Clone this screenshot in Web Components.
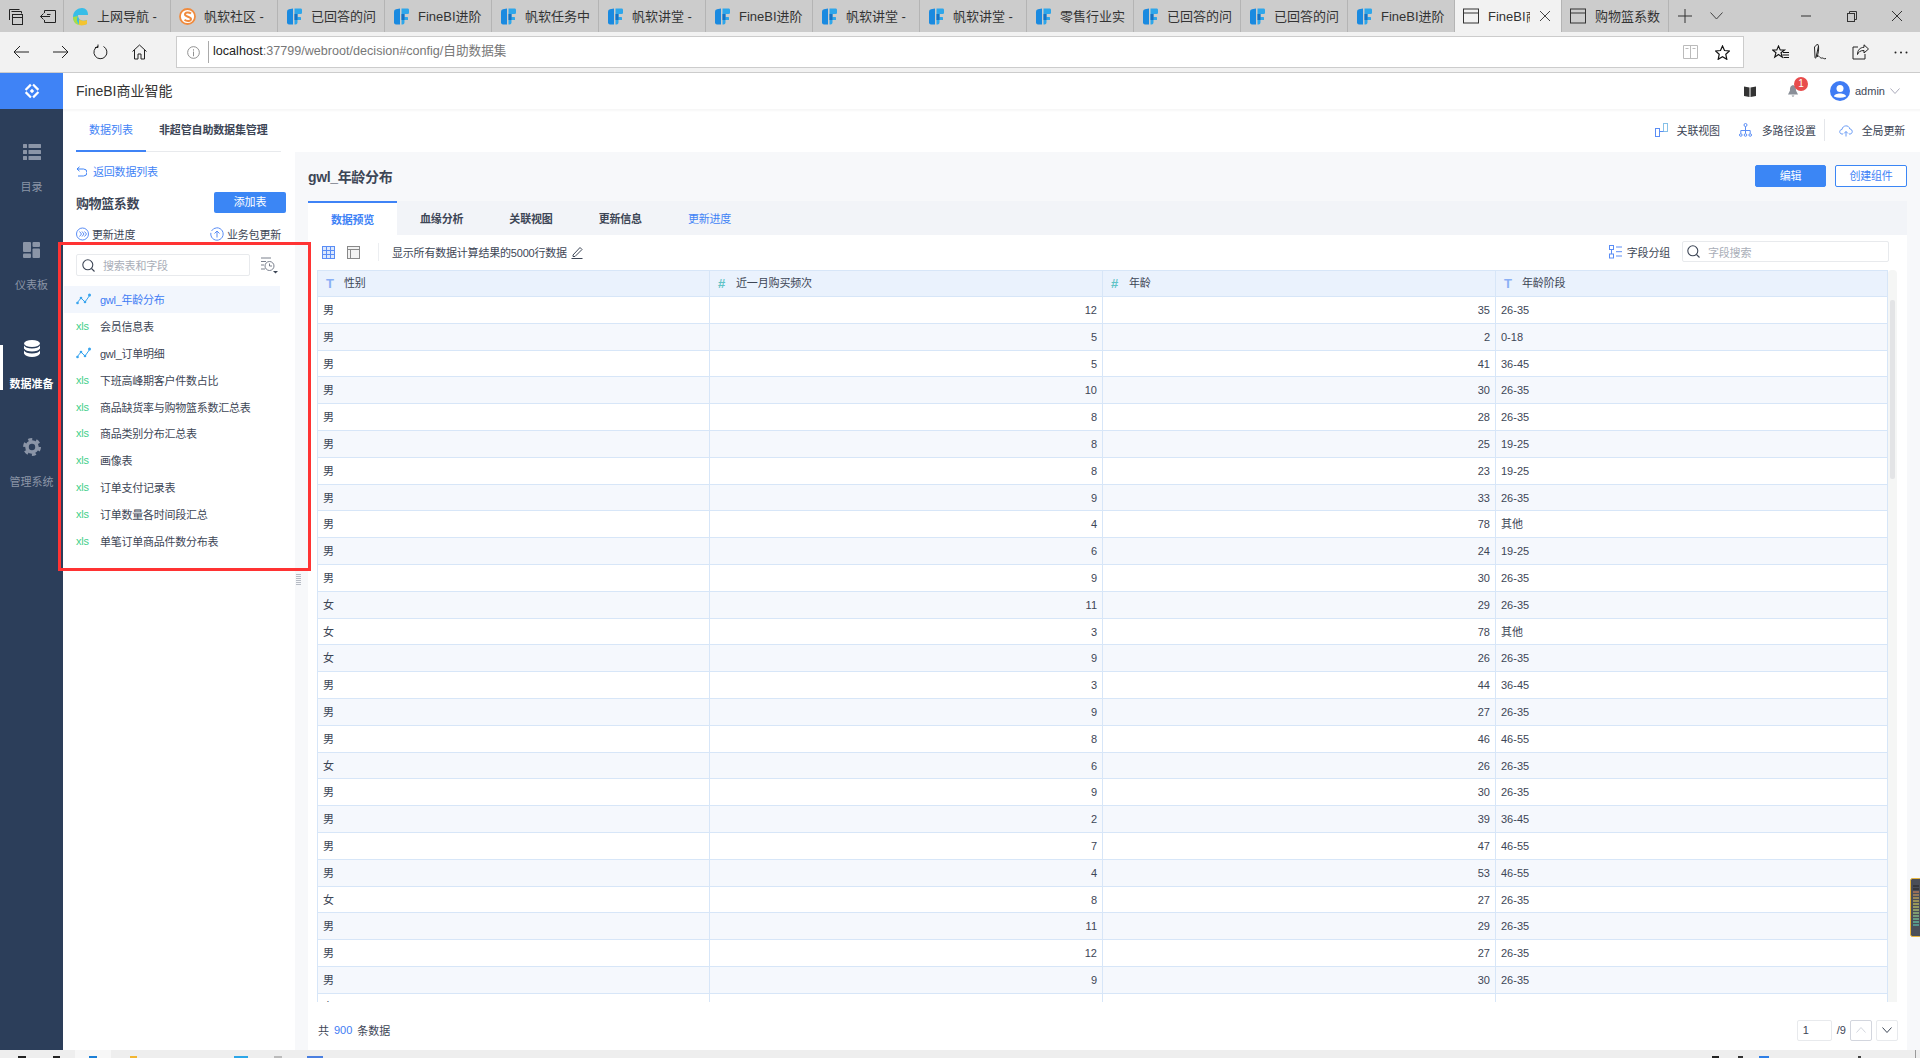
<!DOCTYPE html>
<html lang="zh"><head><meta charset="utf-8"><title>FineBI</title>
<style>
html,body{margin:0;height:1058px;overflow:hidden;background:#fff}
body{display:flex;flex-direction:column;font:11px "Liberation Sans","Noto Sans CJK SC",sans-serif;color:#3d4656}
</style></head><body>
<browser-tabs></browser-tabs>
<browser-bar></browser-bar>
<bi-app></bi-app>
<task-bar></task-bar>
<script>
const ic={
 f:`<svg width="17" height="17" viewBox="0 0 17 17"><path d="M1 3.500Q1 1.800 3 1.300L7 .5V16.500H3Q1 16.500 1 14.500Z" fill="#1a8ae0"/><path d="M8.500 .5H15Q16 .5 16 2V5Q16 6 14.500 6H11.500V9H14.500Q15 9 15 10V12H11.500V14.500Q11.500 16.500 9.500 16.500H8.500Z" fill="#2ea6ea"/><path d="M8.500 6H11.500V12H8.500Z" fill="#1672c4"/></svg>`,
 edge:`<svg width="17" height="19" viewBox="0 0 17 19"><path d="M1 10C1 4 6 1 10 1c4 0 6 3 6 7H6c0 5 5 7 9 5v4c-6 2-14 0-14-7z" fill="#37bde8"/><path d="M1 10c0 5 3 8 7 8-3-2-4-6-2-9z" fill="#a6dd48"/><path d="M7 18c3 1 6 0 8-1v-4c-3 1-6 1-8-1z" fill="#f4c430"/></svg>`,
 s:`<svg width="17" height="19" viewBox="0 0 17 19"><circle cx="8.500" cy="9.500" r="7.500" fill="#fff" stroke="#f08b3e" stroke-width="1.800"/><path d="M12 6.500C10 4.800 6 5 6 7.500s6 2 6 4.500-4.500 2.500-6.500.8" fill="none" stroke="#f08b3e" stroke-width="2"/></svg>`,
 page:`<svg width="17" height="16" viewBox="0 0 17 16"><rect x=".5" y="1" width="15" height="14" fill="none" stroke="#333"/><path d="M.5 5H15.500" stroke="#333"/></svg>`
};
function def(name,html,init){
 customElements.define(name,class extends HTMLElement{
  constructor(){super();this.attachShadow({mode:'open'})}
  connectedCallback(){this.shadowRoot.innerHTML=typeof html==='function'?html(this):html;if(init)init(this)}
 });
}
def('browser-tab',h=>`<style>
:host{display:flex;align-items:center;width:107px;height:32px;box-sizing:border-box;flex:none;padding-left:8px;border-right:1px solid #b4b4b4;background:${h.hasAttribute('active')?'#f2f2f2':'#cccccc'};font:13px "Liberation Sans","Noto Sans CJK SC",sans-serif;color:#333}
.i{width:17px;height:19px;display:flex;align-items:center;flex:none}
.t{margin-left:8px;width:${h.hasAttribute('active')?42:66}px;overflow:hidden;white-space:nowrap;flex:none;padding-bottom:2px}
svg.x{margin-left:9px;flex:none}
</style><span class="i">${ic[h.getAttribute('icon')]}</span><span class="t">${h.getAttribute('label')}</span>${h.hasAttribute('active')?'<svg class="x" width="12" height="12" viewBox="0 0 12 12"><path d="M1 1L11 11M11 1L1 11" stroke="#444"/></svg>':''}`);
const tabs=[['edge','上网导航 -'],['s','帆软社区 -'],['f','已回答的问'],['f','FineBI进阶'],['f','帆软任务中'],['f','帆软讲堂 -'],['f','FineBI进阶'],['f','帆软讲堂 -'],['f','帆软讲堂 -'],['f','零售行业实'],['f','已回答的问'],['f','已回答的问'],['f','FineBI进阶'],['page','FineBI商',1],['page','购物篮系数']];
def('browser-tabs',`<style>
:host{display:flex;align-items:center;height:32px;flex:none;background:#ccc}
.l{width:64px;display:flex;gap:17px;padding-left:9px;box-sizing:border-box;align-items:center;border-right:1px solid #b4b4b4;height:32px;flex:none}
.r{display:flex;align-items:center;flex:none}
</style><div class="l"><svg width="14" height="17" viewBox="0 0 14 17" fill="none" stroke="#222"><path d="M.5 12V1.500H10.500"/><path d="M2.500 3.500H12.500V5.500"/><rect x="3.500" y="6.500" width="10" height="10" fill="#ccc"/><path d="M3.500 9.500H13.500"/></svg><svg width="16" height="13" viewBox="0 0 16 13" fill="none" stroke="#222"><path d="M4.500 3V.5H15.500V12.500H4.500V10"/><path d="M.5 6.500H10M3.500 3.500L.5 6.500l3 3"/><path d="M7 4.500H10.500"/></svg></div>
${tabs.map(t=>`<browser-tab icon="${t[0]}" label="${t[1]}" ${t[2]?'active':''}></browser-tab>`).join('')}
<div class="r" style="margin-left:9px"><svg width="14" height="14" viewBox="0 0 14 14"><path d="M7 0V14M0 7H14" stroke="#333"/></svg><svg style="margin-left:18px" width="13" height="8" viewBox="0 0 13 8"><path d="M.5.5L6.500 7l6-6.500" fill="none" stroke="#444"/></svg>
<svg style="margin-left:78px" width="10" height="2" viewBox="0 0 10 2"><path d="M0 1H10" stroke="#333"/></svg>
<svg style="margin-left:36px" width="10" height="11" viewBox="0 0 10 11" fill="none" stroke="#333"><rect x=".5" y="2.500" width="7" height="8"/><path d="M2.500 2.500V.5H9.500V8.500H7.500"/></svg>
<svg style="margin-left:35px" width="10" height="10" viewBox="0 0 10 10"><path d="M0 0L10 10M10 0L0 10" stroke="#333"/></svg></div>`);
def('browser-bar',`<style>
:host{display:flex;align-items:center;height:41px;box-sizing:border-box;flex:none;background:#f2f2f2;border-bottom:1px solid #ccc;position:relative}
.n{display:flex;width:176px;flex:none;align-items:center;padding-left:13px;box-sizing:border-box;gap:24px}
.a{display:flex;align-items:center;width:568px;flex:1 0 auto;max-width:1568px;height:32px;background:#fff;border:1px solid #ccc;box-sizing:border-box;font:12.600px "Liberation Sans","Noto Sans CJK SC",sans-serif;color:#777;padding-left:10px}
.a b{font-weight:normal;color:#222}.s{width:1px;height:22px;background:#aaa;margin:0 4px 0 8px}
.u{padding-bottom:5px}
.m{flex:1;min-width:0}
.o{display:flex;flex:none;width:176px;align-items:center;padding-left:28px;box-sizing:border-box}
svg{flex:none}
</style><div class="n">
<svg width="16" height="14" viewBox="0 0 16 14" fill="none" stroke="#222"><path d="M16 7H1M7 1L1 7l6 6"/></svg>
<svg width="16" height="14" viewBox="0 0 16 14" fill="none" stroke="#222"><path d="M0 7H15M9 1l6 6-6 6"/></svg>
<svg width="15" height="16" viewBox="0 0 15 16" fill="none" stroke="#222"><path d="M5 2.200A6.500 6.500 0 1 0 10.500 2.500M5 .5V3.500H2"/></svg>
<svg width="15" height="16" viewBox="0 0 15 16" fill="none" stroke="#222"><path d="M.5 7.500L7.500 1l7 6.500M2.500 6V15H6V10H9V15H12.500V6"/></svg>
</div><div class="a"><svg width="13" height="13" viewBox="0 0 14 14" fill="none" stroke="#888"><circle cx="7" cy="7" r="6.300"/><path d="M7 6V11M7 3.500V5"/></svg><span class="s"></span><span class="u"><b>localhost</b>:37799/webroot/decision#config/自助数据集</span><span class="m"></span>
<svg width="15" height="14" viewBox="0 0 15 14" fill="none" stroke="#bbb"><path d="M.5.5H14.500V13.500H.5ZM7.500.5V13.500M2.500 3.500H5.500M9.500 3.500H12.500"/></svg>
<svg style="margin:0 13px 0 17px" width="15" height="15" viewBox="0 0 15 15"><path d="M7.500 1l2 4.500 5 .5-3.700 3.300 1 5-4.300-2.500-4.300 2.500 1-5L.5 6l5-.5z" fill="none" stroke="#111" stroke-width="1.200"/></svg>
</div><div class="o">
<svg width="17" height="15" viewBox="0 0 17 15" fill="none" stroke="#111" stroke-width="1.100"><path d="M6.500 1l1.700 4h4.300L9 7.700l1.300 4.500-3.800-2.700-3.800 2.700L4 7.700.5 5h4.300z"/><path d="M11 7.500H17M10.500 10H17M11.500 12.500H17"/></svg>
<svg style="margin-left:24px" width="16" height="18" viewBox="0 0 16 18" fill="none" stroke="#222"><path d="M2 14L1.500 4 4.500 1l1 2L3 14.500C2.500 16 2 15 2 14zM5.500 3C6 7 5 11 4 14c2-3 3 2 5 1 1-.5 2 1.500 4 .5"/></svg>
<svg style="margin-left:23px" width="17" height="16" viewBox="0 0 17 16" fill="none" stroke="#222"><path d="M12 .8L16.500 5 12 9V6.500C8 6.500 6.500 8 5.500 10.500 5.500 6 8 3.500 12 3.300z"/><path d="M6 3H1V15H13V10"/></svg>
<svg style="margin-left:25px" width="14" height="3" viewBox="0 0 14 3" fill="#222"><circle cx="1.500" cy="1.500" r="1"/><circle cx="7" cy="1.500" r="1"/><circle cx="12.500" cy="1.500" r="1"/></svg>
</div>`);
def('nav-item',h=>`<style>
:host{display:block;height:98.300px;box-sizing:border-box;padding-top:34px;position:relative;text-align:center;color:${h.hasAttribute('active')?'#fff':'#8b95a7'};font-weight:${h.hasAttribute('active')?'bold':'normal'}}
.i{height:18px;display:flex;justify-content:center;align-items:center}
.l{margin-top:18px;line-height:16px;font-size:11px}
.b{position:absolute;left:0;top:39px;width:3px;height:45px;background:#fff;display:${h.hasAttribute('active')?'block':'none'}}
</style><span class="b"></span><div class="i"><slot></slot></div><div class="l">${h.getAttribute('label')}</div>`);
def('bi-nav',`<style>
:host{display:flex;flex-direction:column;width:63px;flex:none;background:#2c3e5a}
.logo{height:36px;background:#3f83f6;display:flex;align-items:center;justify-content:center}
</style><div class="logo"><svg width="18" height="18" viewBox="0 0 18 18" fill="none" stroke="#fff"><path d="M9 1.500L16.500 9 9 16.500 1.500 9Z" stroke-width="2.200" stroke-dasharray="7.500 3.100" stroke-dashoffset="-1.500"/><path d="M9 6.800L11.200 9 9 11.200 6.800 9Z" fill="#fff" stroke="none"/></svg></div>
<nav-item label="目录"><svg width="18" height="16" viewBox="0 0 18 16" fill="#8b95a7"><rect width="4" height="4" rx=".5"/><rect x="5.500" width="12.500" height="4" rx=".5"/><rect y="6" width="4" height="4" rx=".5"/><rect x="5.500" y="6" width="12.500" height="4" rx=".5"/><rect y="12" width="4" height="4" rx=".5"/><rect x="5.500" y="12" width="12.500" height="4" rx=".5"/></svg></nav-item>
<nav-item label="仪表板"><svg width="17" height="16" viewBox="0 0 17 16" fill="#8b95a7"><rect width="8" height="10" rx="1"/><rect x="9.500" width="7.500" height="5" rx="1"/><rect y="11.500" width="8" height="4.500" rx="1"/><rect x="9.500" y="6.500" width="7.500" height="9.500" rx="1"/></svg></nav-item>
<nav-item label="数据准备" active><svg width="16" height="17" viewBox="0 0 16 17" fill="#fff"><ellipse cx="8" cy="3.500" rx="8" ry="3.500"/><path d="M0 5.500c1 2 4 3 8 3s7-1 8-3v3c-1 2-4 3-8 3s-7-1-8-3zM0 10.500c1 2 4 3 8 3s7-1 8-3v3c-1 2-4 3.500-8 3.500s-7-1.500-8-3.500z"/></svg></nav-item>
<nav-item label="管理系统"><svg width="18" height="18" viewBox="0 0 18 18" fill="none" stroke="#8b95a7"><circle cx="9" cy="9" r="5" stroke-width="3.600"/><circle cx="9" cy="9" r="7.600" stroke-width="2.800" stroke-dasharray="4 3.960"/></svg></nav-item>`);
def('bi-header',`<style>
:host{display:flex;align-items:center;height:36px;flex:none;background:#fff;font-size:14px;color:#333;padding-left:13px}
.m{flex:1}.tt{padding-bottom:3px}.r{display:flex;align-items:center;font-size:11px;color:#3d4656;padding-right:20px;position:relative}
.badge{position:absolute;left:50px;top:-4px;width:14px;height:14px;border-radius:50%;background:#e84c4c;color:#fff;text-align:center;line-height:14px;font-size:10px}
</style><span class="tt">FineBI商业智能</span><span class="m"></span><div class="r">
<svg width="12" height="11" viewBox="0 0 12 11" fill="#333"><path d="M0 .5L5.500 1.500V11L0 10zM12 .5L6.500 1.500V11L12 10z"/></svg>
<svg style="margin-left:32px" width="10" height="12" viewBox="0 0 10 12" fill="#8a8f98"><path d="M5 0C2 1 2 3 2 5.500L0 9.500H10L8 5.500C8 3 8 1 5 0zM3.500 10.500H6.500L5 12z"/></svg><span class="badge">1</span>
<svg style="margin-left:32px" width="20" height="20" viewBox="0 0 20 20"><circle cx="10" cy="10" r="10" fill="#3f7cf4"/><circle cx="10" cy="7.500" r="3.500" fill="#fff"/><path d="M4 15.500C4 11.500 16 11.500 16 15.500Q10 18 4 15.500z" fill="#fff"/></svg>
<span style="margin-left:5px;width:30px">admin</span>
<svg style="margin-left:5px" width="10" height="6" viewBox="0 0 10 6"><path d="M.5.5L5 5.500 9.500.5" fill="none" stroke="#aab"/></svg></div>`);
def('bi-subbar',`<style>
:host{display:flex;height:43px;flex:none;padding:0 15px 0 13px;background:#fff;box-shadow:inset 0 3px 2px -1px #f7f7f7;color:#3d4656;font-size:11px}
.tabs{display:flex;width:205px;flex:none;border-bottom:1px solid #e8eaed;height:43px;box-sizing:border-box}
.t{width:70px;text-align:center;line-height:42px;color:#3f83f6;border-bottom:2px solid #3f83f6;height:43px;box-sizing:border-box;margin-bottom:-1px;flex:none}
.u{margin-left:13px;line-height:42px;font-weight:bold;color:#3d4656;white-space:nowrap;letter-spacing:-.15px}
.m{flex:1}.a{display:flex;align-items:center;letter-spacing:-.2px;padding-bottom:1px}
.a span{margin-left:9px}.a svg{flex:none}.s{width:1px;height:22px;background:#e4e6ea}
</style><div class="tabs"><div class="t">数据列表</div><div class="u">非超管自助数据集管理</div></div><div class="m"></div>
<div class="a"><svg width="13" height="14" viewBox="0 0 13 14" fill="none" stroke="#5a8df5"><rect x=".5" y="5.500" width="4" height="8"/><rect x="8.500" y=".5" width="4" height="8" stroke="#86c1e8"/><path d="M4.500 8.500H8.500"/></svg><span>关联视图</span>
<svg style="margin-left:19px" width="13" height="14" viewBox="0 0 13 14" fill="none" stroke="#5a8df5"><circle cx="6.500" cy="2" r="1.500"/><circle cx="1.800" cy="12" r="1.300"/><circle cx="6.500" cy="12" r="1.300"/><circle cx="11.200" cy="12" r="1.300"/><path d="M6.500 3.500V10.500M1.800 10.500V7.500H11.200V10.500"/></svg><span style="margin-left:10px">多路径设置</span>
<span class="s" style="margin-left:8px"></span>
<svg style="margin-left:14px" width="14" height="13" viewBox="0 0 14 13" fill="none" stroke="#6a9cf5"><path d="M4 10H3C0 10 0 5.500 3 5.500 3.500 1 10 .5 10.800 5 14 5 14 10 11 10H10M7 12.500V7.500M5 9.500L7 7.500l2 2"/></svg><span>全局更新</span></div>`);
const xls=`<span style="display:inline-block;width:14px;color:#43cf8a;font-size:11px;line-height:14px;letter-spacing:-.2px">xls</span>`;
const line=c=>`<svg width="15" height="12" viewBox="0 0 15 12" fill="none"><path d="M1 10L5 5l4 4 5-7" stroke="${c}"/><g fill="${c}"><circle cx="1.500" cy="10" r="1.300"/><circle cx="5" cy="5" r="1.300"/><circle cx="9" cy="9" r="1.300"/><circle cx="13.500" cy="2" r="1.500"/></g></svg>`;
def('pack-row',h=>`<style>
:host{display:flex;align-items:center;height:26.800px;width:216px;padding-left:12px;box-sizing:border-box;color:${h.hasAttribute('active')?'#3f7cf4':'#3d4656'};background:${h.hasAttribute('active')?'#f2f6fd':'transparent'};font-size:11px}
.i{width:24px;flex:none;display:flex;align-items:center}
.t{letter-spacing:-.25px;white-space:nowrap}
</style><span class="i">${h.getAttribute('kind')==='line'?line('#38a4ee'):xls}</span><span class="t">${h.getAttribute('label')}</span>`);
const packs=['会员信息表','gwl_订单明细','下班高峰期客户件数占比','商品缺货率与购物篮系数汇总表','商品类别分布汇总表','画像表','订单支付记录表','订单数量各时间段汇总','单笔订单商品件数分布表'];
def('pack-panel',`<style>
:host{display:block;width:232px;flex:none;background:#fff;position:relative;font-size:11px;color:#3d4656}
.back{display:flex;align-items:center;height:20px;margin:9px 0 0 13px;color:#3f83f6;gap:6px;letter-spacing:-.2px}
.name{display:flex;align-items:center;justify-content:space-between;height:21px;margin:11px 9px 0 13px;font-size:13px;font-weight:bold;color:#3d4656;letter-spacing:-.4px}
.btn{width:72px;height:21px;background:#3b86f5;border-radius:2px;color:#fff;font-size:11px;font-weight:normal;text-align:center;line-height:21px;letter-spacing:-.2px}
.upd{display:flex;align-items:center;height:20px;margin:11px 14px 0 13px;letter-spacing:-.2px}
.upd svg{flex:none}.upd span{margin-left:3px}.m{flex:1}
.sr{display:flex;align-items:center;margin:10px 0 0 13px;height:22px}
.box{width:174px;height:22px;box-sizing:border-box;border:1px solid #e8eaed;border-radius:2px;display:flex;align-items:center;padding-left:5px;color:#a9aeb8;letter-spacing:-.2px}
.box span{margin-left:8px}
.list{margin:10px 0 0 1px}
.frame{position:absolute;left:-5px;top:90px;width:253px;height:329px;box-sizing:border-box;border:3px solid #ff3333;pointer-events:none}
.grip{position:absolute;left:233px;top:422px;width:5px;height:11px;background:repeating-linear-gradient(#b6bbc4 0 1px,transparent 1px 2px)}
</style>
<div class="back"><svg width="11" height="11" viewBox="0 0 11 11" fill="none" stroke="#3f83f6"><path d="M3.500 .8L1 3l2.500 2.200M1 3H7.500a3 3 0 0 1 0 7H2"/></svg><span>返回数据列表</span></div>
<div class="name"><span>购物篮系数</span><span class="btn">添加表</span></div>
<div class="upd"><svg width="13" height="14" viewBox="0 0 13 14" fill="none" stroke="#5a8df5"><circle cx="6.500" cy="7" r="6"/><path d="M3.500 4.500L5.500 7l-2 2.500M6 4.500L8 7 6 9.500M8.500 4.500L10.500 7l-2 2.500"/></svg><span>更新进度</span><span class="m" style="flex:1"></span><svg width="14" height="14" viewBox="0 0 14 14" fill="none" stroke="#5a8df5"><path d="M7 .8a6.200 6.200 0 1 1-.1 0M7 10.500V4M4.500 6.500L7 4l2.500 2.500" stroke-dasharray="30 2"/></svg><span>业务包更新</span></div>
<div class="sr"><div class="box"><svg width="13" height="13" viewBox="0 0 13 13" fill="none" stroke="#3d4656" stroke-width="1.100"><circle cx="5.800" cy="5.800" r="5"/><path d="M9.500 9.500L12.500 12.500"/></svg><span>搜索表和字段</span></div>
<svg style="margin-left:10px" width="18" height="17" viewBox="0 0 18 17" fill="none" stroke="#6b7280" stroke-width=".9"><path d="M1 1H11M1 4.500H6M1 8H4M1 12H5"/><circle cx="9.500" cy="9" r="4.500"/><path d="M9.500 6.500V9H12"/><path d="M13 14H18L15.500 16.500Z" fill="#3d4656" stroke="none"/></svg></div>
<div class="list"><pack-row kind="line" label="gwl_年龄分布" active></pack-row>${packs.map((p,i)=>`<pack-row kind="${i==1?'line':'xls'}" label="${p}"></pack-row>`).join('')}</div>
<span class="frame"></span><span class="grip"></span>`);
const rows=`男12 35 26-35|男5 2 0-18|男5 41 36-45|男10 30 26-35|男8 28 26-35|男8 25 19-25|男8 23 19-25|男9 33 26-35|男4 78 其他|男6 24 19-25|男9 30 26-35|女11 29 26-35|女3 78 其他|女9 26 26-35|男3 44 36-45|男9 27 26-35|男8 46 46-55|女6 26 26-35|男9 30 26-35|男2 39 36-45|男7 47 46-55|男4 53 46-55|女8 27 26-35|男11 29 26-35|男12 27 26-35|男9 30 26-35|女  `.split('|').map(r=>{const p=r.split(' ');return [p[0][0],p[0].slice(1),p[1],p[2]]});
def('data-table',`<style>
:host{display:flex;height:732px;flex:none;font-size:11px;color:#3d4656}
.t{width:1571px;overflow:hidden;border-left:1px solid #d7e6f8;box-sizing:border-box;flex:none}
.r{display:grid;grid-template-columns:392px 393px 393px 392px;height:26.800px;box-sizing:border-box;border-bottom:1px solid #d7e6f8;line-height:27px}
.r:nth-child(odd){background:#f5f8fd}
.h{background:#eaf2fd!important;height:27px;border-top:1px solid #d7e6f8;line-height:25px}
.c{border-right:1px solid #d7e6f8;padding:0 5px;box-sizing:border-box;white-space:nowrap}
.n{text-align:right}
.h .c{padding-left:8px;display:flex;align-items:center;letter-spacing:-.15px}
.h i{font:bold 13px "Liberation Sans",sans-serif;width:18px;flex:none}
.T{color:#8ab0f5}.N{color:#5fc3c6}
.sb{width:9px;flex:none;background:#f5f6f5;border-radius:4px 4px 0 0;position:relative;box-sizing:border-box;padding:30px 2px 0}
.th{height:179px;background:#e3e4e6;border-radius:2px}
</style><div class="t"><div class="r h"><div class="c"><i class="T">T</i>性别</div><div class="c"><i class="N">#</i>近一月购买频次</div><div class="c"><i class="N">#</i>年龄</div><div class="c"><i class="T">T</i>年龄阶段</div></div>
${rows.map(r=>`<div class="r"><div class="c">${r[0]}</div><div class="c n">${r[1]}</div><div class="c n">${r[2]}</div><div class="c">${r[3]}</div></div>`).join('')}</div><div class="sb"><div class="th"></div></div>`);
def('bi-main',`<style>
:host{display:flex;flex-direction:column;flex:1;min-width:0;background:#f7f8fa;padding:0 13px;font-size:11px;color:#3d4656}
.head{display:flex;align-items:center;height:49px;flex:none}
.ti{font-size:14px;font-weight:bold;color:#3d4656;letter-spacing:-.35px;flex:1;padding-bottom:2px}
.b{height:22px;width:71px;box-sizing:border-box;text-align:center;line-height:20px;border-radius:2px;border:1px solid #3b86f5;margin:0 0 1px 9px;letter-spacing:-.2px}
.b.p{background:#3b86f5;color:#fff}.b.s{color:#3f83f6;background:#fff;width:72px}
.tabs{display:flex;height:34px;flex:none;background:#f2f4f8;letter-spacing:-.2px}
.tb{width:89.300px;text-align:center;line-height:37px;font-weight:bold;color:#3d4656;flex:none;box-sizing:border-box}
.tb.a{background:#fff;color:#3f83f6;border-top:2px solid #3f83f6;line-height:35px;width:89px}
.panel{flex:1;background:#fff;padding:0 9px;display:flex;flex-direction:column;min-height:0}
.tool{display:flex;align-items:center;height:35px;flex:none;padding:0 0 1px 5px;box-sizing:border-box;position:relative;letter-spacing:-.2px}
.tool svg{flex:none}.sep{width:1px;height:18px;background:#eceef1;margin:0 13px 0 18px}
.m{flex:1}
.sb{width:207px;height:21px;box-sizing:border-box;border:1px solid #e8eaed;border-radius:2px;display:flex;align-items:center;padding-left:4px;color:#a9aeb8;margin:0 9px 1px 12px}
.sb span{margin-left:8px}
.foot{display:flex;align-items:center;height:48px;flex:none;padding:8px 0 0 1px;box-sizing:border-box}
.foot b{font-weight:normal;color:#3f7cf4;margin:0 5px}
.pg{width:35px;height:21px;box-sizing:border-box;border:1px solid #e8eaed;border-radius:2px;line-height:19px;padding-left:5px;font-size:11px}
.bt{width:22px;height:21px;box-sizing:border-box;border:1px solid #e8eaed;border-radius:2px;display:flex;align-items:center;justify-content:center;margin-left:4px}
</style>
<div class="head"><span class="ti">gwl_年龄分布</span><span class="b p">编辑</span><span class="b s">创建组件</span></div>
<div class="tabs"><div class="tb a">数据预览</div><div class="tb">血缘分析</div><div class="tb">关联视图</div><div class="tb">更新信息</div><div class="tb" style="font-weight:normal;color:#3f83f6">更新进度</div></div>
<div class="panel"><div class="tool">
<svg width="13" height="13" viewBox="0 0 13 13" fill="#dce8fd" stroke="#5a8df5"><rect x=".5" y=".5" width="12" height="12"/><path d="M4.500 .5V12.500M8.500 .5V12.500M.5 4.500H12.500M.5 8.500H12.500"/></svg>
<svg style="margin-left:12px" width="13" height="13" viewBox="0 0 13 13" fill="#f2f2f2" stroke="#888"><rect x=".5" y=".5" width="12" height="12"/><path d="M.5 3.500H12.500M3.500 3.500V12.500"/></svg>
<span class="sep"></span><span>显示所有数据计算结果的5000行数据</span>
<svg style="margin-left:4px" width="12" height="13" viewBox="0 0 12 13" fill="none" stroke="#3d4656"><path d="M2 9L9 1.500l2 2L4 10.500H2zM.5 12.500H11.500"/></svg>
<span class="m"></span>
<svg width="13" height="14" viewBox="0 0 13 14" fill="none" stroke="#5a8df5"><rect x=".5" y=".5" width="4" height="4"/><rect x=".5" y="9" width="4" height="4"/><path d="M7 2H13M7 6.700H13M7 11H13M2.500 5V9"/></svg>
<span style="margin-left:5px">字段分组</span>
<div class="sb"><svg width="13" height="13" viewBox="0 0 13 13" fill="none" stroke="#3d4656" stroke-width="1.100"><circle cx="5.800" cy="5.800" r="5"/><path d="M9.500 9.500L12.500 12.500"/></svg><span>字段搜索</span></div></div>
<data-table></data-table>
<div class="foot"><span>共</span><b>900</b><span>条数据</span><span class="m"></span><span class="pg">1</span><span style="margin:0 4px 0 5px">/9</span>
<span class="bt" style="border-color:#d3d6de;margin-left:0"><svg width="10" height="6" viewBox="0 0 10 6"><path d="M.5 5.500L5 .5l4.500 5" fill="none" stroke="#d3d6de"/></svg></span>
<span class="bt"><svg width="10" height="6" viewBox="0 0 10 6"><path d="M.5.500L5 5.500 9.500.5" fill="none" stroke="#3d4656"/></svg></span></div></div>`);
def('bi-app',`<style>
:host{display:flex;flex:1;min-height:0;position:relative;overflow:hidden}
.col{flex:1;min-width:0;display:flex;flex-direction:column}
.row{flex:1;min-height:0;display:flex}
.w{position:absolute;left:1910px;top:805px}
</style><bi-nav></bi-nav><div class="col"><bi-header></bi-header><bi-subbar></bi-subbar><div class="row"><pack-panel></pack-panel><bi-main></bi-main></div></div>
<svg class="w" width="10" height="59" viewBox="0 0 10 59"><rect x=".5" y=".5" width="11" height="58" rx="2" fill="#4a4e58" stroke="#e8b53a"/>
<g stroke-width="1"><path d="M3 8H9" stroke="#222"/><path d="M3 11H9" stroke="#222"/><path d="M3 14H9" stroke="#e58a5a"/><path d="M3 17H9" stroke="#e5a35a"/><path d="M3 20H9" stroke="#e8c35a"/><path d="M3 23H9" stroke="#e8d45a"/><path d="M3 26H9" stroke="#e8e05a"/><path d="M3 29H9" stroke="#dde86a"/><path d="M3 32H9" stroke="#cbe87a"/><path d="M3 35H9" stroke="#b5e88a"/><path d="M3 38H9" stroke="#9ee89a"/><path d="M3 41H9" stroke="#86e8aa"/><path d="M3 44H9" stroke="#6ee8ba"/><path d="M3 47H9" stroke="#5ed8c0"/></g></svg>`);
const tk=[[18,8,'#222'],[53,7,'#222'],[89,8,'#1c7fd6'],[130,7,'#f2b632'],[234,14,'#2ca6e8'],[274,8,'#bbb'],[307,16,'#4a7fe0'],[1712,7,'#222'],[1738,5,'#333'],[1759,10,'#2f7fe6'],[1858,3,'#444']];
let px=0;
def('task-bar',`<style>
:host{display:flex;height:8px;flex:none;background:#eeeeee;position:relative;align-items:flex-end}
.a{position:absolute;left:75px;width:36px;top:0;height:8px;background:#f7f7f7}
i{display:block;height:2px;flex:none;position:relative}
.v{position:absolute;left:1915px;top:0;width:1px;height:8px;background:#999}
</style><span class="a"></span>${tk.map(t=>{const m=t[0]-px;px=t[0]+t[1];return `<i style="margin-left:${m}px;width:${t[1]}px;background:${t[2]}"></i>`}).join('')}<span class="v"></span>`);
</script>
</body></html>
